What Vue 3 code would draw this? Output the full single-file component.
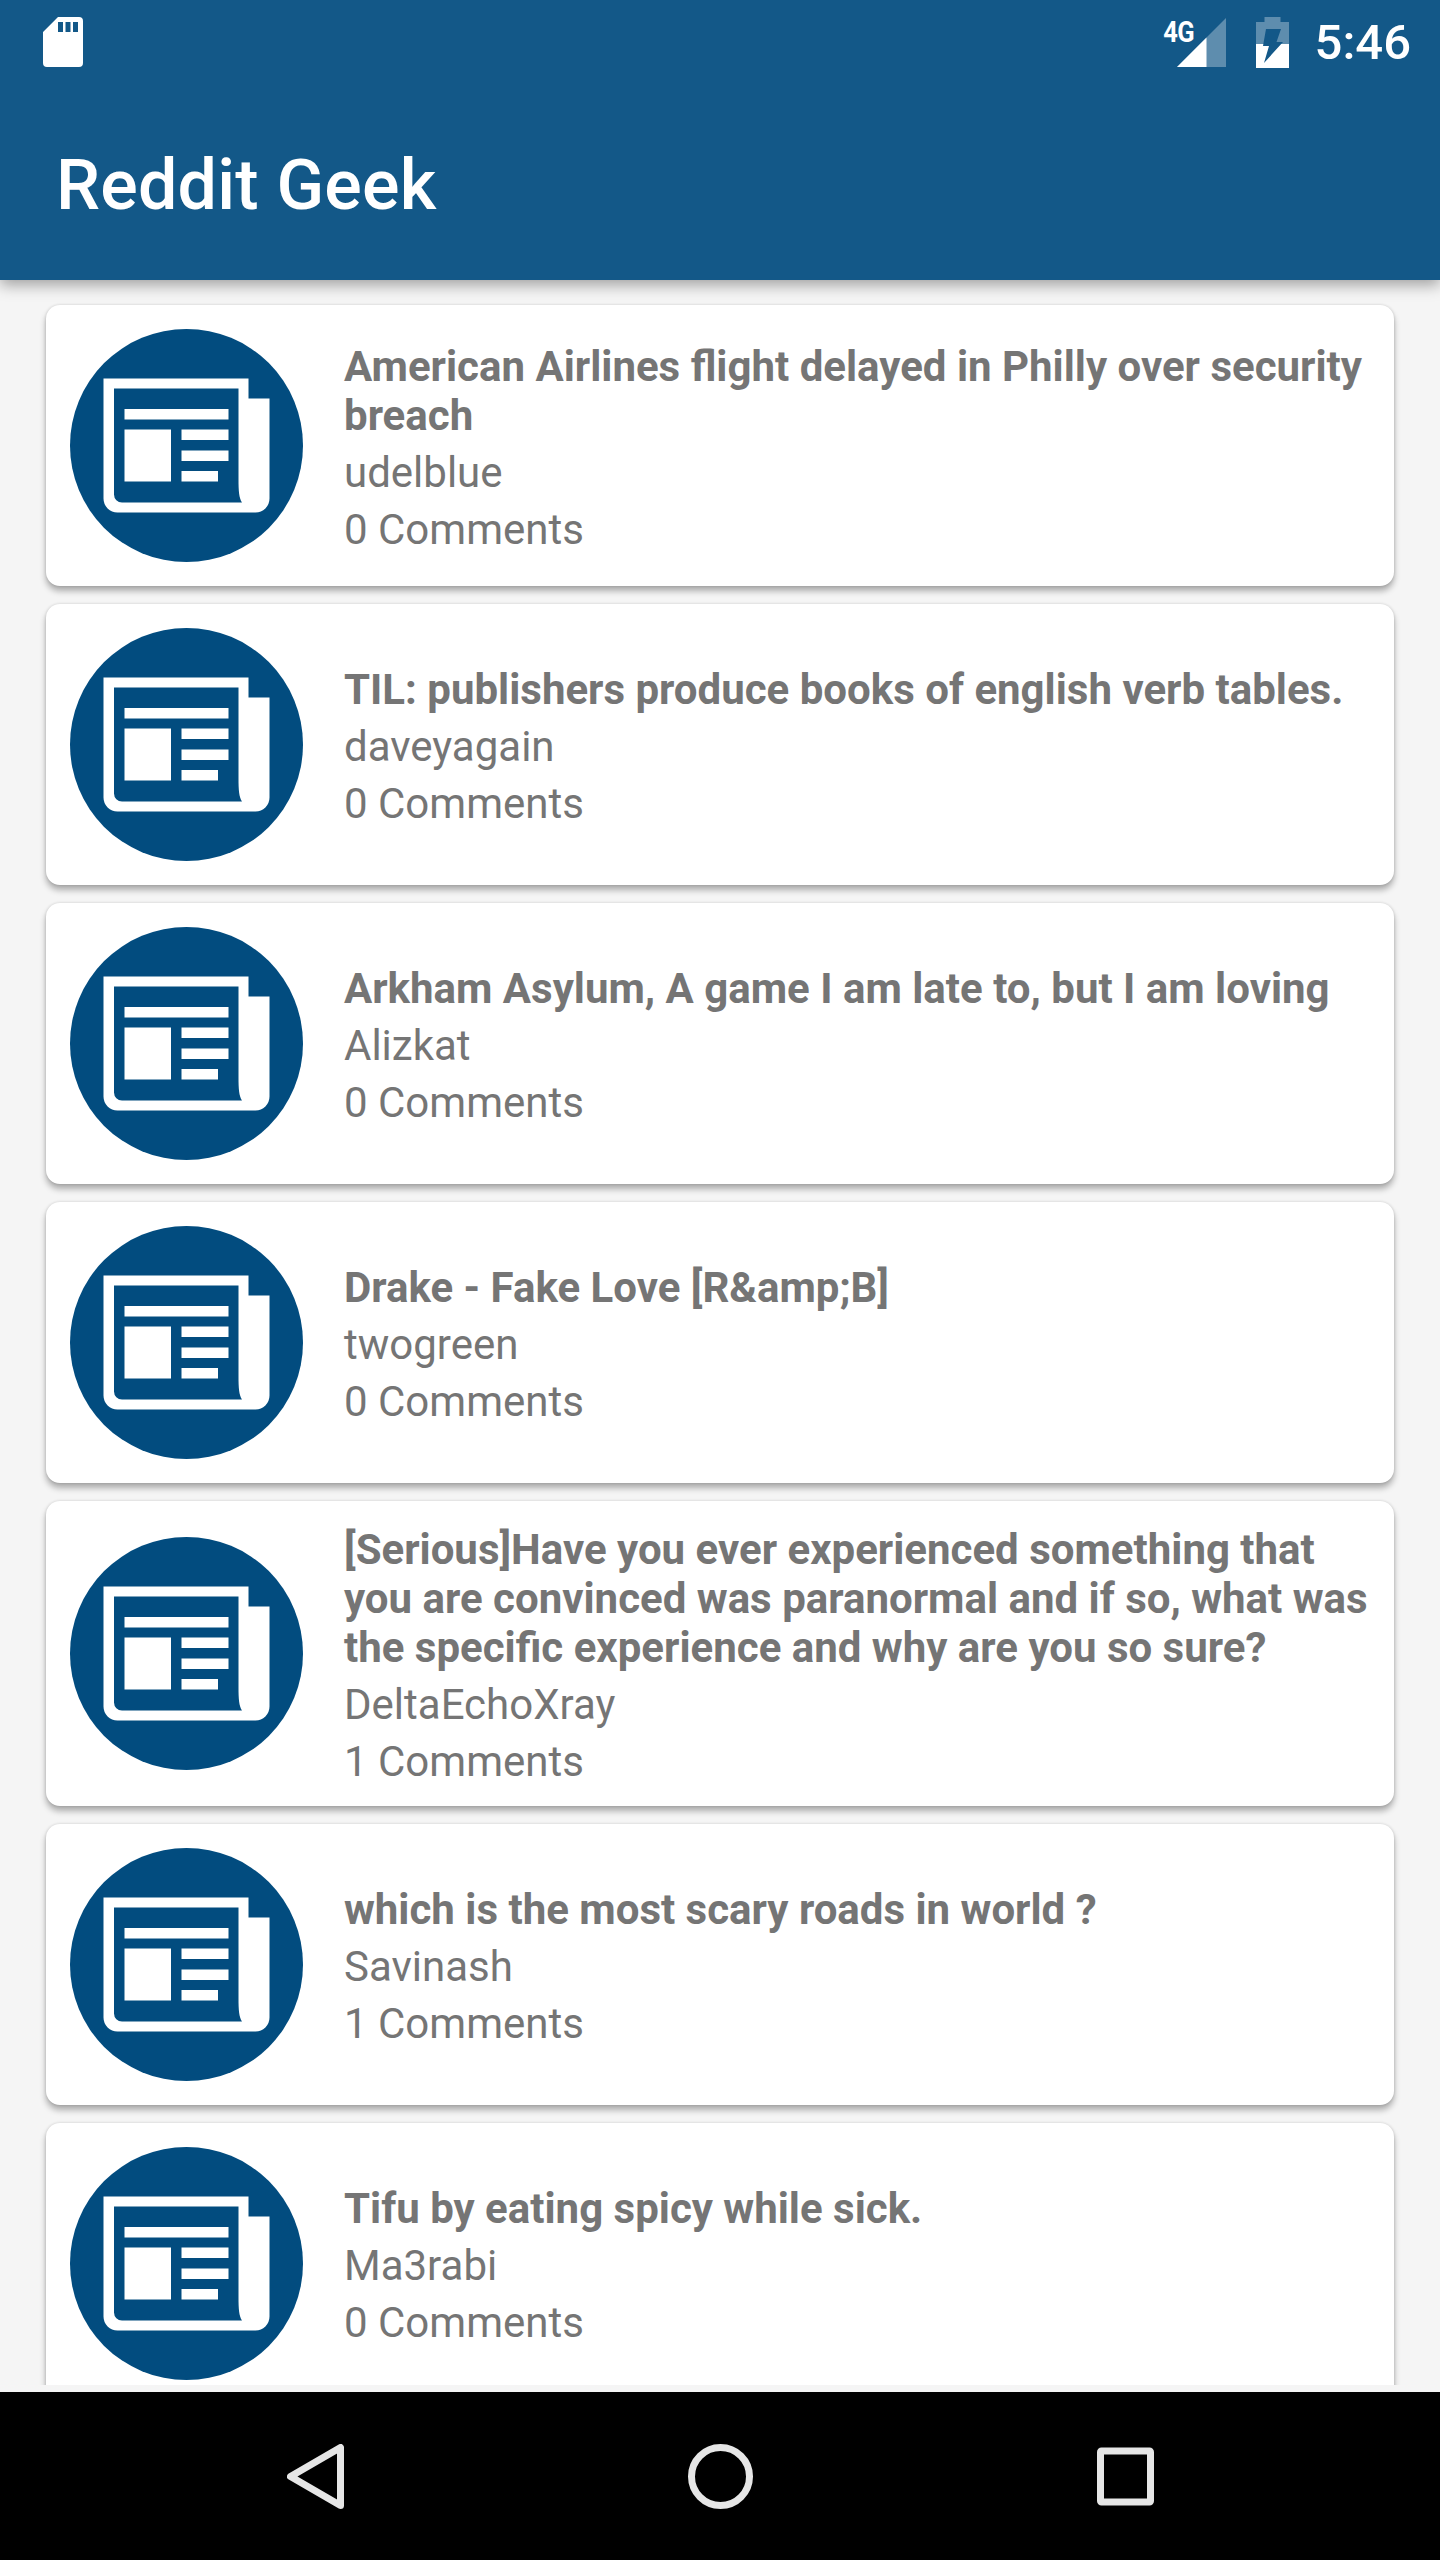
<script setup>
const posts = [
  { title: "American Airlines flight delayed in Philly over security breach", author: "udelblue", comments: 0 },
  { title: "TIL: publishers produce books of english verb tables.", author: "daveyagain", comments: 0 },
  { title: "Arkham Asylum, A game I am late to, but I am loving", author: "Alizkat", comments: 0 },
  { title: "Drake - Fake Love [R&amp;B]", author: "twogreen", comments: 0 },
  {
    title: "[Serious]Have you ever experienced something that you are convinced was paranormal and if so, what was the specific experience and why are you so sure?",
    author: "DeltaEchoXray",
    comments: 1,
  },
  { title: "which is the most scary roads in world ?", author: "Savinash", comments: 1 },
  { title: "Tifu by eating spicy while sick.", author: "Ma3rabi", comments: 0 },
];
</script>

<template>
  <div class="screen">
    <header class="appbar">
      <div class="statusbar">
        <svg width="40" height="50" viewBox="0 0 40 50">
          <path
            fill="#fff"
            fill-rule="evenodd"
            d="M15 0H36a4 4 0 0 1 4 4V46a4 4 0 0 1-4 4H4a4 4 0 0 1-4-4V15ZM15 5V15H20V5ZM22.500 5V15H27.500V5ZM30 5V15H35V5Z"
          />
        </svg>
        <div class="status-right">
          <div class="signal">
            <span class="network">4G</span>
            <svg width="49" height="49" viewBox="0 0 49 49">
              <path fill="#fff" fill-opacity="0.32" d="M49 0V49H0Z" />
              <path fill="#fff" d="M29.500 19.500V49H0Z" />
            </svg>
          </div>
          <svg class="battery" width="33" height="51" viewBox="0 0 33 51">
            <path fill="#fff" fill-opacity="0.32" d="M8.500 0H24.500V5H33V27H0V5H8.500Z" />
            <path fill="#fff" d="M0 27H33V51H0Z" />
            <path fill="#135888" d="M10 12H25L20.500 25H27L8 46L13 29H7Z" />
          </svg>
          <span class="clock">5:46</span>
        </div>
      </div>
      <div class="toolbar">Reddit Geek</div>
    </header>

    <main class="list">
      <article v-for="post in posts" :key="post.title" class="card">
        <svg class="thumb" width="233" height="233" viewBox="0 0 233 233">
          <circle cx="116.500" cy="116.500" r="116.500" fill="#024c7f" />
          <path
            fill="#fff"
            d="M33.500 49.500H178.500V69.500H199.500V169.500a14 14 0 0 1-14 14H47.500a14 14 0 0 1-14-14Z"
          />
          <path
            fill="#024c7f"
            d="M44 59.500H168.500V150C168.500 162 169 169 172 173.500H52a8 8 0 0 1-8-8Z"
          />
          <path
            fill="#fff"
            d="M54.500 80H158.500V90.500H54.500ZM54.500 100.500H101V152.500H54.500ZM111.500 100.500H158.500V111H111.500ZM111.500 121.500H158.500V132H111.500ZM111.500 142H148V152.500H111.500Z"
          />
        </svg>
        <div class="card-body">
          <h2 class="card-title">{{ post.title }}</h2>
          <p class="card-meta">{{ post.author }}</p>
          <p class="card-meta">{{ post.comments }} Comments</p>
        </div>
      </article>
    </main>

    <footer class="navbar">
      <svg width="57" height="65" viewBox="0 0 57 65">
        <path
          fill="none"
          stroke="#e6e6e6"
          stroke-width="7"
          stroke-linejoin="round"
          d="M53.500 3.500V61.500L3.500 32.500Z"
        />
      </svg>
      <svg width="65" height="65" viewBox="0 0 65 65">
        <circle cx="32.500" cy="32.500" r="29" fill="none" stroke="#e6e6e6" stroke-width="7" />
      </svg>
      <svg width="57" height="59" viewBox="0 0 57 59">
        <rect x="3.500" y="4" width="50" height="51" rx="1" fill="none" stroke="#e6e6e6" stroke-width="7" />
      </svg>
    </footer>
  </div>
</template>

<style>
body {
  background: #000;
}
</style>

<style scoped>
.screen,
.screen * {
  box-sizing: border-box;
}

.screen {
  display: flex;
  flex-direction: column;
  width: 1440px;
  height: 2560px;
  overflow: hidden;
  background: #f5f5f5;
  font-family: Roboto, "Liberation Sans", sans-serif;
}

.appbar {
  position: relative;
  z-index: 2;
  flex: 0 0 280px;
  background: #135888;
  box-shadow: 0 5px 14px rgba(0, 0, 0, 0.35);
  color: #fff;
}

.statusbar {
  display: flex;
  align-items: center;
  justify-content: space-between;
  height: 84px;
  padding: 0 29px 0 43px;
}

.status-right {
  display: flex;
  align-items: center;
}

.signal {
  position: relative;
  display: flex;
  margin-right: 30px;
}

.network {
  position: absolute;
  top: -1px;
  right: 32px;
  font-size: 30px;
  font-weight: 700;
  line-height: 30px;
  letter-spacing: -1px;
  transform: scaleX(0.85);
  transform-origin: right center;
}

.battery {
  margin-right: 26px;
}

.clock {
  font-size: 49px;
  font-weight: 500;
  line-height: 57px;
}

.toolbar {
  display: flex;
  align-items: center;
  height: 196px;
  padding: 6px 0 0 56px;
  font-size: 70px;
  font-weight: 500;
  line-height: 82px;
  letter-spacing: 0.2px;
}

.list {
  display: flex;
  flex: 0 0 2105px;
  flex-direction: column;
  gap: 18px;
  overflow: hidden;
  padding: 25px 46px 0;
}

.card {
  display: flex;
  flex: 0 0 auto;
  align-items: center;
  min-height: 281px;
  padding: 20px 21px 20px 24px;
  border-radius: 14px;
  background: #fff;
  box-shadow:
    0 5px 6px rgba(0, 0, 0, 0.3),
    0 0 3px rgba(0, 0, 0, 0.15);
}

.thumb {
  flex: 0 0 233px;
  margin-right: 41px;
}

.card-body {
  min-width: 0;
  padding-top: 4px;
  color: #757575;
}

.card-title {
  margin: 0;
  font-size: 42px;
  font-weight: 700;
  line-height: 49px;
}

.card-meta {
  margin: 8px 0 0;
  font-size: 42px;
  font-weight: 400;
  line-height: 49px;
}

.navbar {
  display: flex;
  flex: 0 0 168px;
  align-items: center;
  justify-content: space-between;
  margin-top: 7px;
  padding: 0 286px 0 287px;
  background: #000;
}
</style>
